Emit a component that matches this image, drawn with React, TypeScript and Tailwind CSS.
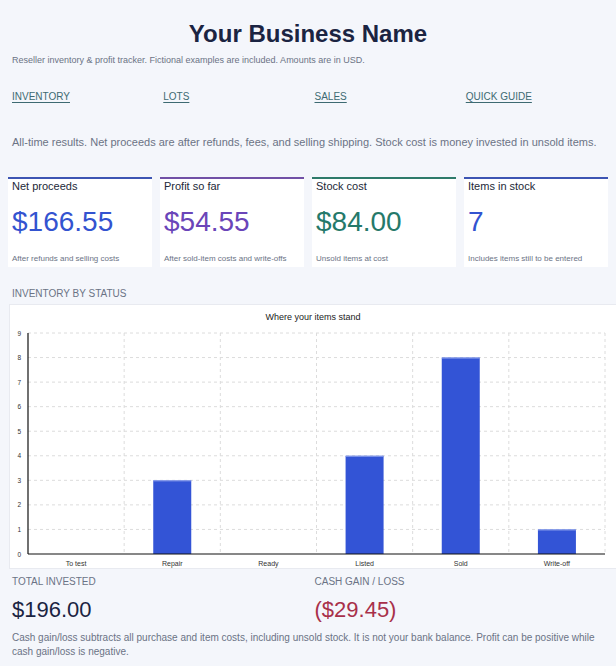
import React from "react";

const font = { fontFamily: '"Liberation Sans", Arial, Helvetica, sans-serif' };

const cards = [
  { label: "Net proceeds", value: "$166.55", note: "After refunds and selling costs", bar: "bg-[#3d55b3]", color: "text-[#3353d0]" },
  { label: "Profit so far", value: "$54.55", note: "After sold-item costs and write-offs", bar: "bg-[#7150a6]", color: "text-[#6a45b9]" },
  { label: "Stock cost", value: "$84.00", note: "Unsold items at cost", bar: "bg-[#2e7a6a]", color: "text-[#25796a]" },
  { label: "Items in stock", value: "7", note: "Includes items still to be entered", bar: "bg-[#3d55b3]", color: "text-[#3353d0]" },
];

const data = [
  { name: "To test", v: 0 },
  { name: "Repair", v: 3 },
  { name: "Ready", v: 0 },
  { name: "Listed", v: 4 },
  { name: "Sold", v: 8 },
  { name: "Write-off", v: 1 },
];

function Chart() {
  const L = 18, R = 595, T = 28, B = 249;
  const cw = (R - L) / 6;
  const unit = (B - T) / 9;
  return (
    <svg width="606" height="263" viewBox="0 0 606 263" className="block">
      <text x="303" y="15" textAnchor="middle" fontSize="9" fill="#222" style={font}>Where your items stand</text>
      {Array.from({ length: 9 }, (_, i) => i + 1).map((i) => (
        <line key={"h" + i} x1={L} x2={R} y1={B - i * unit} y2={B - i * unit} stroke="#dcdcdc" strokeDasharray="3 3" strokeWidth="1" />
      ))}
      {Array.from({ length: 6 }, (_, i) => i + 1).map((i) => (
        <line key={"v" + i} x1={L + i * cw} x2={L + i * cw} y1={T} y2={B} stroke="#dcdcdc" strokeDasharray="3 3" strokeWidth="1" />
      ))}
      {Array.from({ length: 10 }, (_, i) => i).map((i) => (
        <text key={"y" + i} x="11" y={B - i * unit + 2.5} textAnchor="end" fontSize="6.5" fill="#333" style={font}>{i}</text>
      ))}
      {data.map((d, i) => {
        const cx = L + cw * i + cw / 2;
        const h = d.v * unit;
        return (
          <g key={d.name}>
            {d.v > 0 && (
              <>
                <rect x={cx - 19} y={B - h} width="38" height={h} fill="#3354d6" />
                <rect x={cx - 19} y={B - h} width="38" height="1" fill="#8fa3ee" />
              </>
            )}
            <text x={cx} y="261" textAnchor="middle" fontSize="7" fill="#333" style={font}>{d.name}</text>
          </g>
        );
      })}
      <line x1={L} x2={L} y1={T} y2={B} stroke="#111" strokeWidth="1.2" />
      <line x1={L} x2={R} y1={B} y2={B} stroke="#111" strokeWidth="1.2" />
    </svg>
  );
}

export default function App() {
  return (
    <div className="min-h-[666px] w-[616px] overflow-hidden bg-[#f4f6fb]" style={font}>
      <h1 className="pt-[20px] text-center text-[24px] font-bold leading-[28px] text-[#1b2442]">Your Business Name</h1>
      <p className="mt-[7px] px-[12px] text-[9px] leading-[10px] text-[#6b7385]">
        Reseller inventory &amp; profit tracker. Fictional examples are included. Amounts are in USD.
      </p>
      <nav className="ml-[12px] mt-[26px] grid w-[605px] grid-cols-4 text-[10px] leading-[12px]">
        <a className="text-[#3d6a72] underline underline-offset-[2px]">INVENTORY</a>
        <a className="text-[#3d6a72] underline underline-offset-[2px]">LOTS</a>
        <a className="text-[#3d6a72] underline underline-offset-[2px]">SALES</a>
        <a className="text-[#3d6a72] underline underline-offset-[2px]">QUICK GUIDE</a>
      </nav>
      <p className="mt-[32px] px-[12px] text-[11px] leading-[14px] text-[#6b7385]">
        All-time results. Net proceeds are after refunds, fees, and selling shipping. Stock cost is money invested in unsold items.
      </p>
      <div className="mt-[28px] grid grid-cols-4 gap-[8px] pl-[8px] pr-[8px]">
        {cards.map((c) => (
          <div key={c.label} className="flex h-[90px] flex-col bg-white">
            <div className={`h-[1.5px] w-full ${c.bar}`} />
            <div className="px-[4px]">
              <div className="mt-[0.5px] text-[11px] leading-[14px] text-[#222838]">{c.label}</div>
              <div className={`mt-[13px] text-[28px] leading-[32px] ${c.color}`}>{c.value}</div>
              <div className="mt-[16px] text-[8px] leading-[10px] text-[#6b7385]">{c.note}</div>
            </div>
          </div>
        ))}
      </div>
      <div className="mt-[21px] px-[12px] text-[10px] leading-[12px] text-[#6b7385]">INVENTORY BY STATUS</div>
      <div className="ml-[10px] mt-[5px] w-[606px] bg-white shadow-[0_0_0_1px_#e8eaf0]">
        <Chart />
      </div>
      <div className="ml-[12px] mt-[8px] grid w-[605px] grid-cols-2">
        <div>
          <div className="text-[10px] leading-[12px] text-[#6b7385]">TOTAL INVESTED</div>
          <div className="mt-[9px] text-[22px] leading-[26px] text-[#1b2442]">$196.00</div>
        </div>
        <div>
          <div className="text-[10px] leading-[12px] text-[#6b7385]">CASH GAIN / LOSS</div>
          <div className="mt-[9px] text-[22px] leading-[26px] text-[#a8304a]">($29.45)</div>
        </div>
      </div>
      <p className="mt-[8px] px-[12px] text-[10px] leading-[14px] text-[#6b7385]">
        Cash gain/loss subtracts all purchase and item costs, including unsold stock. It is not your bank balance. Profit can be positive while cash gain/loss is negative.
      </p>
    </div>
  );
}
